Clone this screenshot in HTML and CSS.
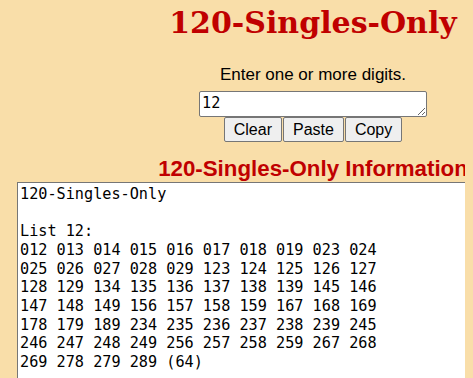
FILE: index.html
```html
<!DOCTYPE html>
<html lang="en">
<head>
  <meta charset="UTF-8" />
  <title>120-Singles-Only</title>
  <link rel="stylesheet" href="styles.css">
</head>
<body>
  <div class="page">
    <h1>120-Singles-Only</h1>
    <p class="prompt">Enter one or more digits.</p>

    <div class="entry">
      <textarea id="digits" class="digits" spellcheck="false">12</textarea>
      <div class="buttons">
        <button id="clear">Clear</button>
        <button id="paste">Paste</button>
        <button id="copy">Copy</button>
      </div>
    </div>

    <h2>120-Singles-Only Information</h2>
    <textarea id="info" class="info" readonly spellcheck="false">120-Singles-Only

List 12:
012 013 014 015 016 017 018 019 023 024
025 026 027 028 029 123 124 125 126 127
128 129 134 135 136 137 138 139 145 146
147 148 149 156 157 158 159 167 168 169
178 179 189 234 235 236 237 238 239 245
246 247 248 249 256 257 258 259 267 268
269 278 279 289 (64)</textarea>
  </div>
</body>
</html>
```

FILE: styles.css
```css
:root {
  --bg: #f9dea9;
  --red: #c00000;
  --mono: "DejaVu Sans Mono", "Liberation Mono", monospace;
}

html, body {
  overflow: hidden;
}

body {
  margin: 0 8px;
  background: var(--bg);
  font-family: "Liberation Sans", Arial, sans-serif;
  color: #000;
}

.page {
  width: 610px;
  text-align: center;
}

h1 {
  margin: 3px 0 0;
  font-family: "DejaVu Serif", Georgia, serif;
  font-size: 30px;
  line-height: 40px;
  font-weight: bold;
  color: var(--red);
}

.prompt {
  margin: 22px 0 7px;
  font-size: 17px;
  line-height: 19px;
}

.entry {
  display: flex;
  flex-direction: column;
  align-items: center;
}

.digits {
  box-sizing: border-box;
  width: 228px;
  height: 26px;
  margin: 0;
  padding: 1px 2px;
  border: 1px solid #767676;
  border-radius: 2px;
  font-family: var(--mono);
  font-size: 15.2px;
  line-height: 20px;
  background: #fff;
}

.buttons {
  display: flex;
  gap: 1px;
}

.buttons button {
  height: 25px;
  margin: 0;
  padding: 0 9px;
  border: 1px solid #767676;
  border-radius: 2px;
  background: #efefef;
  font-family: "Liberation Sans", Arial, sans-serif;
  font-size: 16px;
  color: #000;
}

h2 {
  margin: 14px 0 1px;
  font-size: 22.3px;
  line-height: 25px;
  font-weight: bold;
  color: var(--red);
}

.info {
  display: block;
  box-sizing: border-box;
  width: 592px;
  height: 320px;
  margin: 0 auto;
  padding: 2px 2px;
  border: 1px solid #767676;
  font-family: var(--mono);
  font-size: 15.2px;
  line-height: 18.67px;
  background: #fff;
  color: #000;
  resize: none;
  overflow: hidden;
}
```
